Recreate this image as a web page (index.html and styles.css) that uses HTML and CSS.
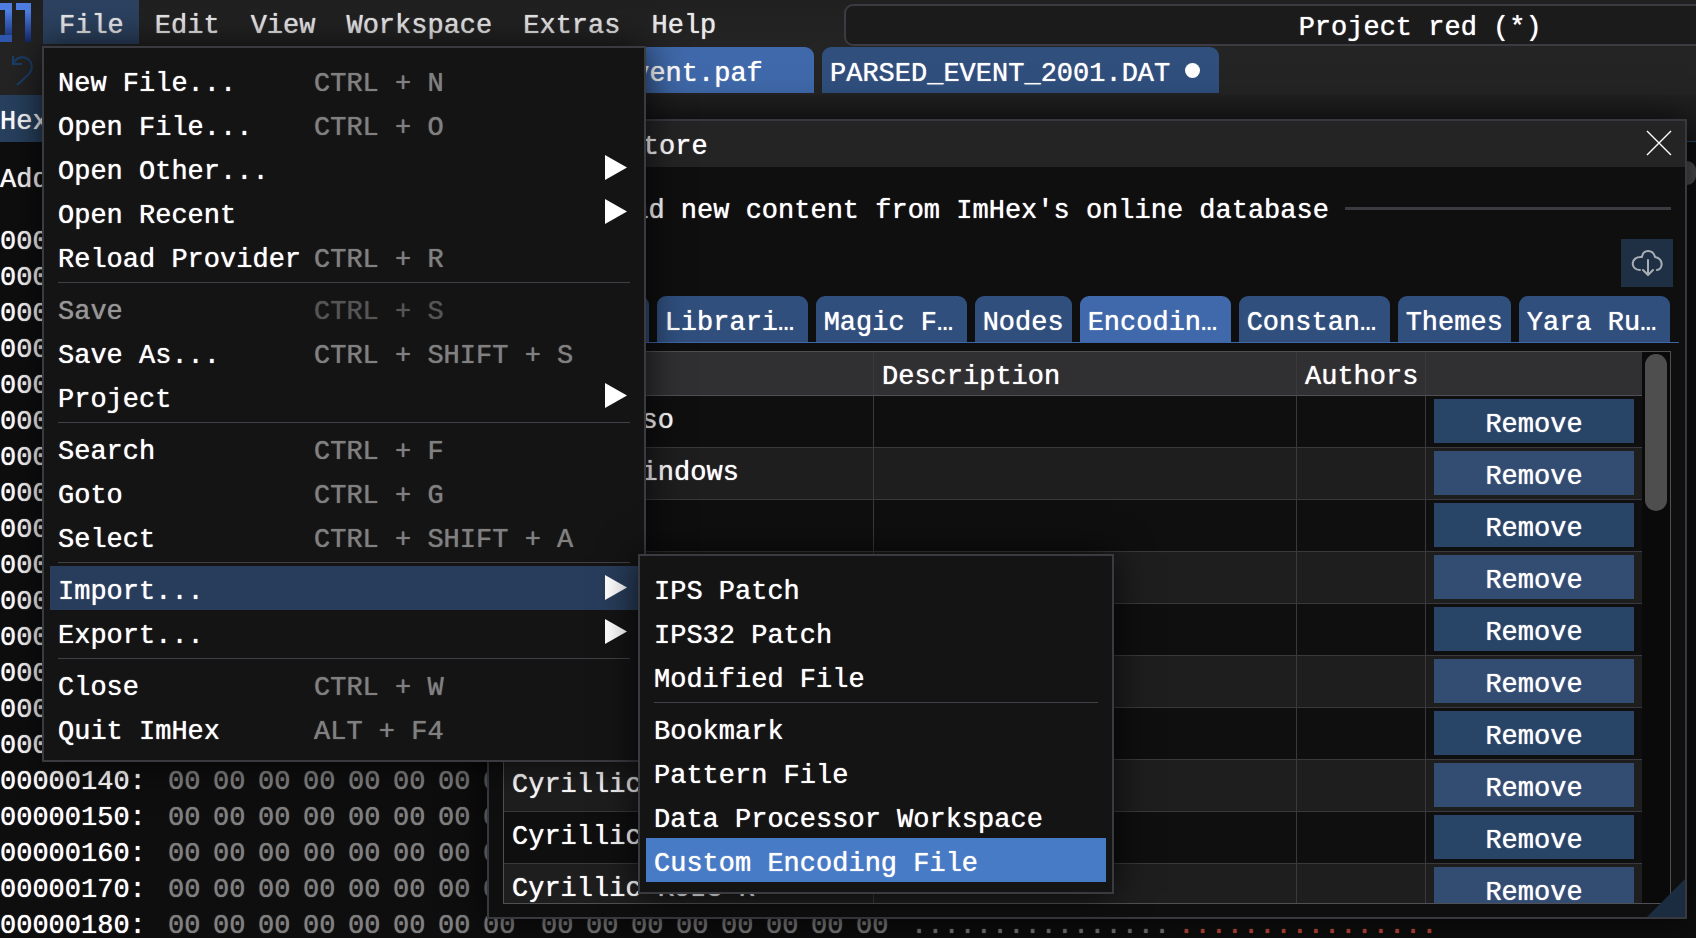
FILE: index.html
```html
<!DOCTYPE html>
<html lang="en">
<head>
<meta charset="utf-8">
<title>ImHex - Project red</title>
<link rel="stylesheet" href="styles.css">
</head>
<body>
<div class="app">
  <header class="topbar">
    <svg class="logo" viewBox="0 0 43 44" aria-hidden="true">
      <defs>
        <linearGradient id="logo-fade" x1="0" y1="0" x2="0" y2="1">
          <stop offset="0" stop-color="#4f80e6"/>
          <stop offset="1" stop-color="#12286a"/>
        </linearGradient>
      </defs>
      <path d="M5 10h7v26H5zM25 10h6v32h-6z" fill="url(#logo-fade)"/>
      <path d="M0 3h12v7H0zM16 3h15v7H16z" fill="#4d7de0"/>
      <path d="M0 35h12v7H0z" fill="#2f57ad"/>
    </svg>
    <nav class="menubar">
      <div class="menubar-item">
        <button class="menubar-button is-open" type="button">File</button>
        <ul class="menu menu-file">
          <li><button class="menu-row" type="button"><span class="menu-name">New File...</span><kbd>CTRL + N</kbd></button></li>
          <li><button class="menu-row" type="button"><span class="menu-name">Open File...</span><kbd>CTRL + O</kbd></button></li>
          <li><button class="menu-row has-arrow" type="button"><span class="menu-name">Open Other...</span></button></li>
          <li><button class="menu-row has-arrow" type="button"><span class="menu-name">Open Recent</span></button></li>
          <li><button class="menu-row" type="button"><span class="menu-name">Reload Provider</span><kbd>CTRL + R</kbd></button></li>
          <li class="menu-line"></li>
          <li><button class="menu-row" type="button" disabled><span class="menu-name">Save</span><kbd>CTRL + S</kbd></button></li>
          <li><button class="menu-row" type="button"><span class="menu-name">Save As...</span><kbd>CTRL + SHIFT + S</kbd></button></li>
          <li><button class="menu-row has-arrow" type="button"><span class="menu-name">Project</span></button></li>
          <li class="menu-line"></li>
          <li><button class="menu-row" type="button"><span class="menu-name">Search</span><kbd>CTRL + F</kbd></button></li>
          <li><button class="menu-row" type="button"><span class="menu-name">Goto</span><kbd>CTRL + G</kbd></button></li>
          <li><button class="menu-row" type="button"><span class="menu-name">Select</span><kbd>CTRL + SHIFT + A</kbd></button></li>
          <li class="menu-line"></li>
          <li class="menu-parent">
            <button class="menu-row has-arrow is-open" type="button"><span class="menu-name">Import...</span></button>
            <ul class="menu menu-import">
              <li><button class="menu-row" type="button">IPS Patch</button></li>
              <li><button class="menu-row" type="button">IPS32 Patch</button></li>
              <li><button class="menu-row" type="button">Modified File</button></li>
              <li class="menu-line"></li>
              <li><button class="menu-row" type="button">Bookmark</button></li>
              <li><button class="menu-row" type="button">Pattern File</button></li>
              <li><button class="menu-row" type="button">Data Processor Workspace</button></li>
              <li><button class="menu-row is-hovered" type="button">Custom Encoding File</button></li>
            </ul>
          </li>
          <li><button class="menu-row has-arrow" type="button"><span class="menu-name">Export...</span></button></li>
          <li class="menu-line"></li>
          <li><button class="menu-row" type="button"><span class="menu-name">Close</span><kbd>CTRL + W</kbd></button></li>
          <li><button class="menu-row" type="button"><span class="menu-name">Quit ImHex</span><kbd>ALT + F4</kbd></button></li>
        </ul>
      </div>
      <button class="menubar-button" type="button">Edit</button>
      <button class="menubar-button" type="button">View</button>
      <button class="menubar-button" type="button">Workspace</button>
      <button class="menubar-button" type="button">Extras</button>
      <button class="menubar-button" type="button">Help</button>
    </nav>
    <button class="command" type="button">Project red (*)</button>
  </header>

  <div class="toolbar">
    <button class="undo" type="button" aria-label="Undo">
      <svg viewBox="0 0 24 32" fill="none" stroke="#1b3f6b" stroke-width="2"><path d="M2 1v8h9M2 9C5 3 10 1 15 3c7 3 7 11 3 16L6 30"/></svg>
    </button>
    <div class="files">
      <button class="tab tab-file is-active" type="button">event.paf</button>
      <button class="tab" type="button">PARSED_EVENT_2001.DAT<span class="unsaved"></span></button>
    </div>
  </div>

  <div class="views"><button class="view-tab" type="button">Hex</button></div>

  <main class="hex">
    <div class="hex-head">Address</div>
    <div class="hex-row"><span class="addr">00000050:</span></div>
    <div class="hex-row"><span class="addr">00000060:</span></div>
    <div class="hex-row"><span class="addr">00000070:</span></div>
    <div class="hex-row"><span class="addr">00000080:</span></div>
    <div class="hex-row"><span class="addr">00000090:</span></div>
    <div class="hex-row"><span class="addr">000000A0:</span></div>
    <div class="hex-row"><span class="addr">000000B0:</span></div>
    <div class="hex-row"><span class="addr">000000C0:</span></div>
    <div class="hex-row"><span class="addr">000000D0:</span></div>
    <div class="hex-row"><span class="addr">000000E0:</span></div>
    <div class="hex-row"><span class="addr">000000F0:</span></div>
    <div class="hex-row"><span class="addr">00000100:</span></div>
    <div class="hex-row"><span class="addr">00000110:</span></div>
    <div class="hex-row"><span class="addr">00000120:</span></div>
    <div class="hex-row"><span class="addr">00000130:</span></div>
    <div class="hex-row"><span class="addr">00000140:</span><span class="bytes"><i>00</i><i>00</i><i>00</i><i>00</i><i>00</i><i>00</i><i>00</i><i>00</i></span></div>
    <div class="hex-row"><span class="addr">00000150:</span><span class="bytes"><i>00</i><i>00</i><i>00</i><i>00</i><i>00</i><i>00</i><i>00</i><i>00</i></span></div>
    <div class="hex-row"><span class="addr">00000160:</span><span class="bytes"><i>00</i><i>00</i><i>00</i><i>00</i><i>00</i><i>00</i><i>00</i><i>00</i></span></div>
    <div class="hex-row"><span class="addr">00000170:</span><span class="bytes"><i>00</i><i>00</i><i>00</i><i>00</i><i>00</i><i>00</i><i>00</i><i>00</i></span></div>
    <div class="hex-row"><span class="addr">00000180:</span><span class="bytes"><i>00</i><i>00</i><i>00</i><i>00</i><i>00</i><i>00</i><i>00</i><i>00</i></span><span class="bytes"><i>00</i><i>00</i><i>00</i><i>00</i><i>00</i><i>00</i><i>00</i><i>00</i></span><span class="ascii">................</span><span class="ascii ascii-red">................</span></div>
  </main>
  <div class="page-scroll"></div>

  <section class="store" role="dialog" aria-labelledby="store-title">
    <div class="store-title">
      <span id="store-title">Content Store</span>
      <button class="close" type="button" aria-label="Close">
        <svg viewBox="0 0 24 24" stroke="#fff" stroke-width="1.4"><path d="M0 0l24 24M24 0L0 24"/></svg>
      </button>
    </div>
    <div class="store-body">
      <div class="caption"><span>Download new content from ImHex's online database</span></div>
      <div class="actions">
        <button class="cloud" type="button" aria-label="Download all">
          <svg viewBox="0 0 32 28" fill="none" stroke="#a9afb6" stroke-width="2" stroke-linecap="round" stroke-linejoin="round"><path d="M9 21C-1 21-1 7 11 8 12 0 22 0 24 8c9 2 8 12 2 13M17 11v14M12 21l5 5 5-5"/></svg>
        </button>
      </div>
      <div class="store-tabs">
        <button class="tab" type="button">Patterns</button>
        <button class="tab tab-cut" type="button">Librari…</button>
        <button class="tab tab-cut" type="button">Magic F…</button>
        <button class="tab" type="button">Nodes</button>
        <button class="tab tab-cut is-active" type="button">Encodin…</button>
        <button class="tab tab-cut" type="button">Constan…</button>
        <button class="tab" type="button">Themes</button>
        <button class="tab tab-cut" type="button">Yara Ru…</button>
      </div>
      <div class="list">
        <div class="list-view">
          <table>
            <colgroup><col class="col-name"><col><col class="col-authors"><col class="col-action"></colgroup>
            <thead><tr><th>Name</th><th>Description</th><th>Authors</th><th></th></tr></thead>
            <tbody>
              <tr><td>Arabic iso</td><td></td><td></td><td><button class="remove" type="button">Remove</button></td></tr>
              <tr><td>Arabic windows</td><td></td><td></td><td><button class="remove" type="button">Remove</button></td></tr>
              <tr><td></td><td></td><td></td><td><button class="remove" type="button">Remove</button></td></tr>
              <tr><td></td><td></td><td></td><td><button class="remove" type="button">Remove</button></td></tr>
              <tr><td></td><td></td><td></td><td><button class="remove" type="button">Remove</button></td></tr>
              <tr><td></td><td></td><td></td><td><button class="remove" type="button">Remove</button></td></tr>
              <tr><td></td><td></td><td></td><td><button class="remove" type="button">Remove</button></td></tr>
              <tr><td>Cyrillic</td><td></td><td></td><td><button class="remove" type="button">Remove</button></td></tr>
              <tr><td>Cyrillic</td><td></td><td></td><td><button class="remove" type="button">Remove</button></td></tr>
              <tr><td>Cyrillic KOI8-R</td><td></td><td></td><td><button class="remove" type="button">Remove</button></td></tr>
            </tbody>
          </table>
        </div>
        <div class="list-scroll"><div class="thumb"></div></div>
      </div>
    </div>
    <div class="grip"></div>
  </section>
</div>
</body>
</html>
```
FILE: styles.css
```css
* { box-sizing: border-box; }

body {
  margin: 0;
  background: #0e0e0e;
  color: #fff;
  font: 27px/37px "Liberation Mono", monospace;
  text-shadow: 0 0 1px currentColor;
}

button {
  margin: 0;
  padding: 0;
  border: 0;
  background: none;
  color: inherit;
  font: inherit;
  text-align: left;
  text-shadow: inherit;
  white-space: nowrap;
}

svg { display: block; }

.app {
  position: relative;
  display: flex;
  flex-direction: column;
  height: 100vh;
  overflow: hidden;
}

/* Menu bar */
.topbar {
  display: flex;
  height: 47px;
  background: linear-gradient(#202020, #242424);
}
.logo { flex: none; width: 43px; height: 44px; }
.menubar { display: flex; height: 44px; color: #e8e8e8; }
.menubar-item { position: relative; }
.menubar-button { height: 44px; padding: 8px 15px 0 16px; }
.menubar-button.is-open { background: #2c4260; }
.command {
  flex: 1;
  height: 42px;
  margin: 4px -300px 0 113px;
  padding-top: 4px;
  border: 2px solid #3b3b41;
  border-radius: 9px;
  background: #1b1b1b;
  text-align: center;
}

/* Drop-down menus */
.menu {
  position: absolute;
  z-index: 10;
  margin: 0;
  padding: 10px 6px;
  border: 2px solid #3a3a41;
  background: #141414;
  box-shadow: 0 0 36px rgba(0, 0, 0, .75);
  color: #fff;
  list-style: none;
}
.menu-file { top: 46px; left: -1px; width: 604px; }
.menu-import { top: -12px; left: 100%; width: 476px; }
.menu-parent { position: relative; }
.menu-row {
  display: flex;
  width: 100%;
  height: 44px;
  padding: 8px 8px 0;
}
.menu-row:disabled { color: #969696; }
.menu-row.is-open { background: #283d5b; }
.menu-row.is-hovered { background: #487bc6; }
.menu-name { width: 256px; }
.menu-row kbd { color: #808080; font: inherit; }
.menu-row:disabled kbd { color: #555; }
.has-arrow { justify-content: space-between; }
.has-arrow::after {
  content: "";
  width: 22px;
  height: 25px;
  margin: 1px 3px 0 0;
  background: #fff;
  clip-path: polygon(0 0, 100% 50%, 0 100%);
}
.menu-line {
  height: 8px;
  margin: 0 8px;
  padding-top: 4px;
}
.menu-line::before {
  content: "";
  display: block;
  height: 1px;
  background: #404046;
}

/* Tabs */
.tab {
  height: 46px;
  padding: 8px 8px 0;
  border-radius: 9px 9px 0 0;
  background: #304f7d;
}
.tab.is-active { background: #3f69aa; }
.tab-cut { width: 151px; }

.toolbar {
  display: flex;
  flex: none;
  height: 48px;
  background: #242424;
}
.undo { width: 24px; height: 32px; margin: 8px 0 0 11px; }
.files { display: flex; gap: 8px; margin-left: 565px; }
.tab-file { width: 214px; padding-left: 17px; }
.files .tab:last-child { padding-right: 19px; }
.unsaved {
  display: inline-block;
  width: 15px;
  height: 15px;
  margin-left: 15px;
  border-radius: 50%;
  background: #fff;
  vertical-align: 3px;
}

.views {
  flex: none;
  height: 47px;
  border-bottom: 1px solid #2b4470;
  background: linear-gradient(#212121, #191919);
}
.view-tab {
  width: 100px;
  height: 47px;
  padding-top: 8px;
  background: #28415f;
}

/* Hex editor */
.hex { flex: 1; min-height: 0; padding-top: 18px; overflow: hidden; }
.hex-head { margin-bottom: 24px; line-height: 40px; }
.hex-row { display: flex; line-height: 36px; white-space: pre; }
.addr { flex: none; width: 168px; }
.bytes { display: flex; margin-right: 13px; color: #808080; }
.bytes i { width: 45px; font-style: normal; }
.ascii { margin-right: 8px; color: #7a7a7a; }
.bytes + .ascii { margin-left: -3px; }
.ascii-red { color: #c04a3c; }
.page-scroll {
  position: absolute;
  top: 161px;
  right: 0;
  width: 9px;
  height: 24px;
  border-radius: 0 9px 9px 0;
  background: #4e4e4e;
}

/* Content store window */
.store {
  position: absolute;
  top: 119px;
  right: 9px;
  bottom: 19px;
  left: 487px;
  display: flex;
  flex-direction: column;
  border: 2px solid #38383f;
  background: #0f0f0f;
  box-shadow: 0 0 36px rgba(0, 0, 0, .75);
}
.store-title {
  display: flex;
  justify-content: space-between;
  height: 46px;
  padding: 8px 14px 0 8px;
  background: #242424;
}
.close { width: 24px; height: 24px; margin-top: 2px; }
.close svg { width: 24px; height: 24px; overflow: visible; }
.store-body {
  display: flex;
  flex: 1;
  flex-direction: column;
  min-height: 0;
  padding: 26px 14px 13px;
}
.caption { display: flex; align-items: center; gap: 16px; margin-left: 32px; white-space: pre; }
.caption::after { content: ""; flex: 1; height: 3px; margin-bottom: 6px; background: #3b3b42; }
.actions { display: flex; justify-content: flex-end; margin-top: 9px; margin-right: -2px; }
.cloud { width: 52px; height: 48px; padding: 0 10px; background: #1f3045; }
.cloud svg { width: 32px; height: 28px; }
.store-tabs {
  display: flex;
  flex: none;
  gap: 8px;
  margin: 9px -8px 8px 0;
  border-bottom: 1px solid #3d66a8;
}
.store-tabs .tab { flex: none; }

.list {
  display: flex;
  flex: 1;
  min-height: 0;
  border: 1px solid #505054;
}
.list-view { flex: 1; overflow: hidden; }
.list-scroll { width: 28px; padding: 2px 3px; background: #0a0a0a; }
.thumb { height: 157px; border-radius: 11px; background: #4e4e4e; }

table { width: 100%; border-spacing: 0; table-layout: fixed; }
.col-name { width: 370px; }
.col-authors { width: 129px; }
.col-action { width: 216px; }
th, td {
  padding: 0 8px;
  border-right: 1px solid #3a3a3e;
  border-bottom: 1px solid #3a3a3e;
  font-weight: 400;
  text-align: left;
  vertical-align: top;
  white-space: nowrap;
}
th { height: 44px; padding-top: 7px; padding-bottom: 0; line-height: 36px; border-bottom-color: #505054; background: #303032; }
td { height: 52px; padding-top: 7px; }
td:last-child { padding-top: 3px; }
th:last-child, td:last-child { border-right: 0; }
tbody tr:nth-child(even) { background: #1e1e1e; }
.remove {
  display: block;
  width: 100%;
  height: 44px;
  padding-top: 8px;
  background: #284467;
  text-align: center;
}
tr:nth-child(even) .remove { background: #324c72; }

.grip {
  position: absolute;
  right: 0;
  bottom: 0;
  width: 38px;
  height: 38px;
  background: #1c2c40;
  clip-path: polygon(100% 0, 100% 100%, 0 100%);
}
```
